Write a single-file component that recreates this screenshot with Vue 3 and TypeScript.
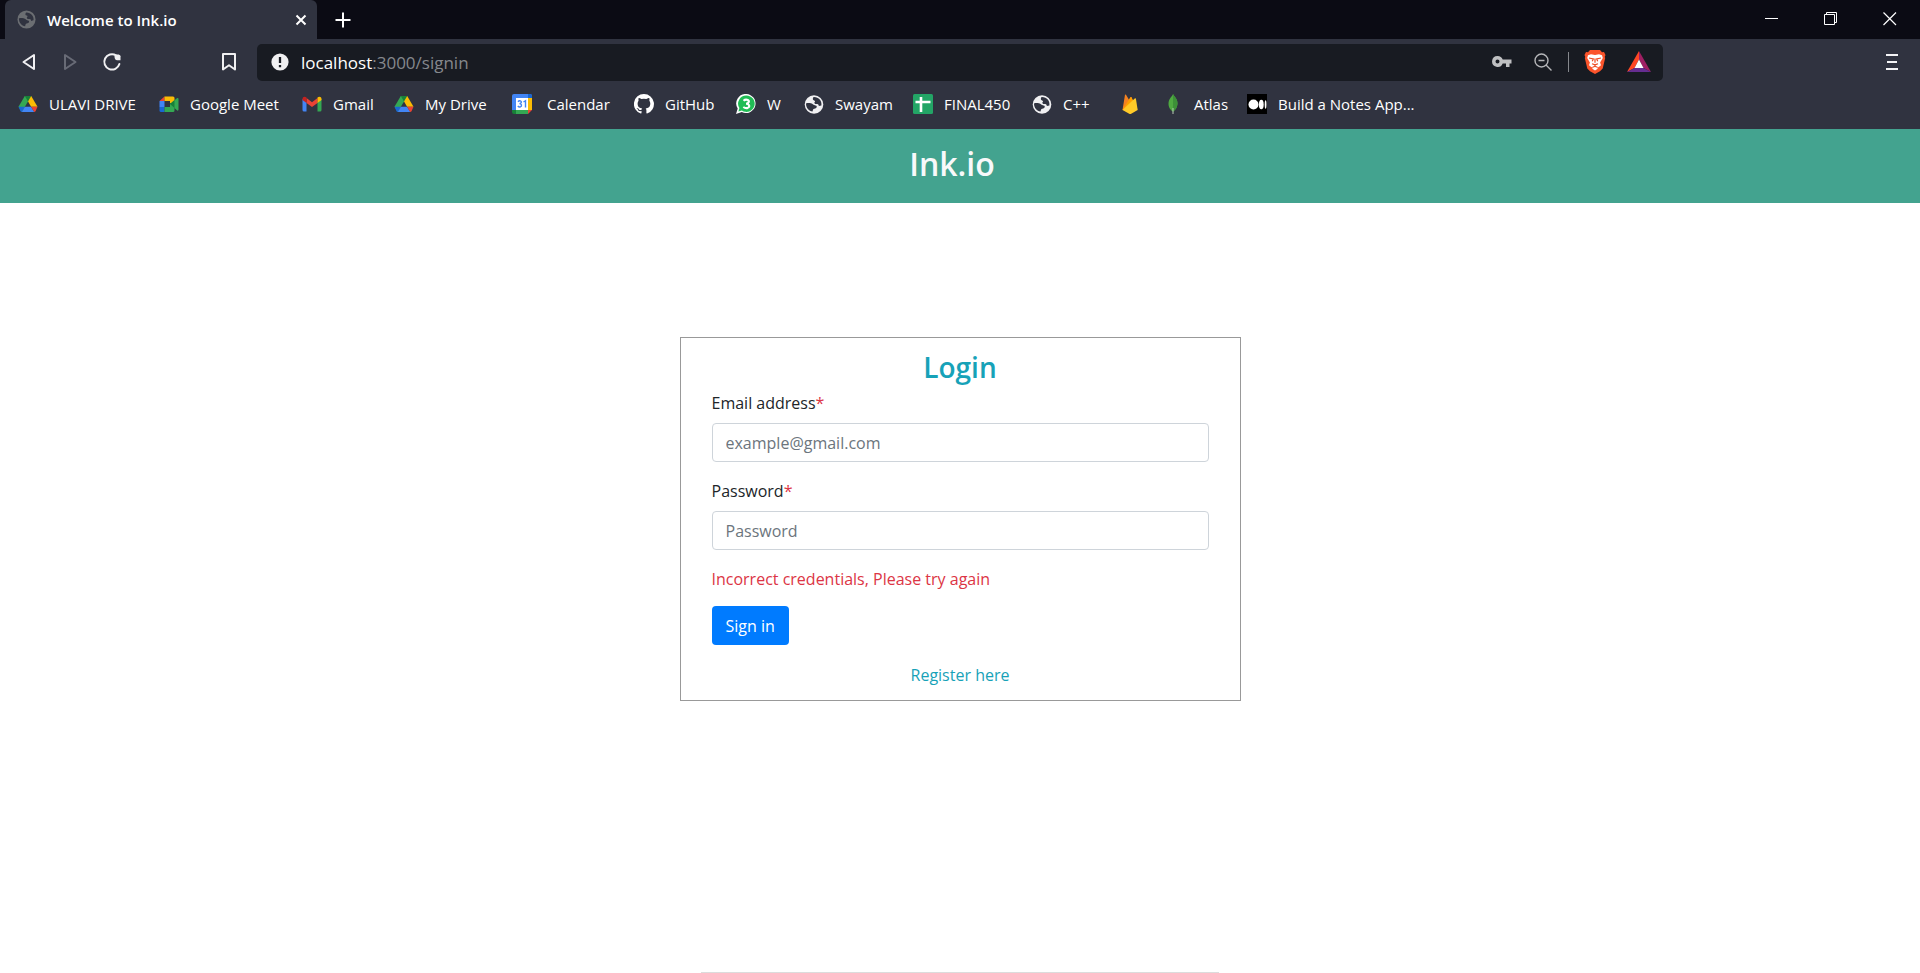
<script setup lang="ts">
import { ref } from 'vue'

interface Bookmark {
  icon: string
  label: string
}

const email = ref('')
const password = ref('')
const message = ref('Incorrect credentials, Please try again')

const bookmarks: Bookmark[] = [
  { icon: 'drive', label: 'ULAVI DRIVE' },
  { icon: 'meet', label: 'Google Meet' },
  { icon: 'gmail', label: 'Gmail' },
  { icon: 'drive', label: 'My Drive' },
  { icon: 'calendar', label: 'Calendar' },
  { icon: 'github', label: 'GitHub' },
  { icon: 'whatsapp', label: 'W' },
  { icon: 'globe', label: 'Swayam' },
  { icon: 'sheet', label: 'FINAL450' },
  { icon: 'globe', label: 'C++' },
  { icon: 'firebase', label: '' },
  { icon: 'leaf', label: 'Atlas' },
  { icon: 'medium', label: 'Build a Notes App...' },
]
</script>

<template>
  <div class="window">
    <header class="chrome">
      <div class="tabs">
        <div class="tab">
          <svg class="tab-icon" viewBox="0 0 20 20" aria-hidden="true">
            <circle cx="10" cy="10" r="9.500" fill="#6b6e72" />
            <path d="M2 9c1.500-.8 3.200-.5 5-.2 2 .3 2.200 2 4.500 2.200 1.500.2 1.700 1.600.6 2.400-1.300.8-2.600.4-3.100 1.800L8.500 17C5 16.800 2 13.500 2 9zM9.500 2.600c-1.200 1.700-.8 3 .7 3.300 1.200.3 1 1.600.1 2 .2 1.700 1.500 1.600 2.900 1.700 1.200.1 1.600 1 1.600 1.900l2.600-.6c.8-4.300-2.900-8.600-7.900-8.300z" fill="#303340" />
          </svg>
          <span class="tab-title">Welcome to Ink.io</span>
          <button class="plain close" type="button" aria-label="Close tab">
            <svg width="12" height="12" viewBox="0 0 12 12"><path d="M1.500 1.500l9 9M10.500 1.500l-9 9" stroke="#fff" stroke-width="2" /></svg>
          </button>
        </div>
        <button class="plain new-tab" type="button" aria-label="New tab">
          <svg width="16" height="16" viewBox="0 0 16 16"><path d="M8 0.500v15M0.500 8h15" stroke="#fff" stroke-width="2" /></svg>
        </button>
        <div class="window-controls">
          <button class="plain" type="button" aria-label="Minimize">
            <svg width="14" height="14" viewBox="0 0 14 14"><path d="M0 6.500h13" stroke="#fff" /></svg>
          </button>
          <button class="plain" type="button" aria-label="Restore">
            <svg width="14" height="14" viewBox="0 0 14 14" fill="none" stroke="#fff"><path d="M.5 2.500h10v10h-10zM2.500 2.500v-2h10v10h-2" /></svg>
          </button>
          <button class="plain" type="button" aria-label="Close">
            <svg width="14" height="14" viewBox="0 0 14 14"><path d="M.5.5l12.500 12.500M13 .5L.5 13" stroke="#fff" stroke-width="1.200" /></svg>
          </button>
        </div>
      </div>

      <div class="toolbar">
        <div class="nav">
          <button class="plain" type="button" aria-label="Back">
            <svg width="18" height="18" viewBox="0 0 18 18"><path d="M14 2v14L3.500 9z" fill="none" stroke="#f0f0f2" stroke-width="2" stroke-linejoin="round" /></svg>
          </button>
          <button class="plain" type="button" aria-label="Forward">
            <svg width="18" height="18" viewBox="0 0 18 18"><path d="M4 2v14l10.500-7z" fill="none" stroke="#686b76" stroke-width="2" stroke-linejoin="round" /></svg>
          </button>
          <button class="plain" type="button" aria-label="Reload">
            <svg width="20" height="20" viewBox="0 0 20 20"><path d="M14 3.300A7.700 7.700 0 1 0 17.400 12" fill="none" stroke="#f0f0f2" stroke-width="2" stroke-linecap="round" /><path d="M12.500 4.500c0-2.500 6-2.500 6-.2v4h-3.300c-1.700 0-2.700-1.600-2.700-3.800z" fill="#f0f0f2" /></svg>
          </button>
          <button class="plain bookmark-page" type="button" aria-label="Bookmark this page">
            <svg width="18" height="20" viewBox="0 0 18 20"><path d="M3 2h12v15.500l-6-4.300-6 4.300z" fill="none" stroke="#f0f0f2" stroke-width="2" stroke-linejoin="round" /></svg>
          </button>
        </div>
        <div class="address">
          <button class="plain" type="button" aria-label="Site information">
            <svg width="18" height="18" viewBox="0 0 18 18"><circle cx="9" cy="9" r="8.600" fill="#f0f0f2" /><path d="M9 4v6M9 12v2.300" stroke="#181b22" stroke-width="2.300" /></svg>
          </button>
          <span class="url"><span class="host">localhost</span>:3000/signin</span>
          <div class="address-actions">
            <button class="plain" type="button" aria-label="Passwords">
              <svg width="20" height="12" viewBox="0 0 20 12"><path fill="#bfc0c2" fill-rule="evenodd" d="M5.500 0a5.500 5.500 0 1 0 5.200 7.500H14V11h3.500V7.500h2v-4h-8.800A5.500 5.500 0 0 0 5.500 0zm0 3.500a2 2 0 1 1 0 4 2 2 0 0 1 0-4z" /></svg>
            </button>
            <button class="plain" type="button" aria-label="Zoom">
              <svg width="18" height="18" viewBox="0 0 18 18" fill="none" stroke="#b5b6b9" stroke-width="1.400"><circle cx="7.500" cy="7.500" r="6.500" /><path d="M4.500 7.500h6M12 12l5.500 5.500" /></svg>
            </button>
            <span class="divider"></span>
            <button class="plain" type="button" aria-label="Brave Shields">
              <svg width="22" height="24" viewBox="0 0 22 24"><path d="M6 0h10l2 2.300 2-.3 1.500 3-.8 2 .5 1-2.500 10.500L16 21.300 11 24l-5-2.700-2.700-2.800L.8 8l.5-1-.8-2L2 2l2 .3z" fill="#fb542b" /><path d="M4 5.200l3-1 4 .8 4-.8 3 1L18.800 8l-2.700 4.500.9 2.700-2.500 2-1.500-.7.7 2.300L11 20.500l-2.700-1.700.7-2.300-1.500.7-2.500-2 .9-2.700L3.200 8z" fill="#fff" /><path d="M5 8l4.300 1-1 2.200M17 8l-4.300 1 1 2.200M11 8.500v4.200M8 13.700l3 1.200 3-1.200M9.200 17.200L11 16l1.800 1.200" fill="none" stroke="#ed491f" stroke-width="1.200" /></svg>
            </button>
            <button class="plain rewards" type="button" aria-label="Brave Rewards">
              <svg width="24" height="22" viewBox="0 0 24 22"><path d="M12 0v8.500L7.500 17 0 21z" fill="#ff4724" /><path d="M12 0l12 21-7.500-4L12 8.500z" fill="#9e1f63" /><path d="M0 21l7.500-4h9l7.500 4z" fill="#662d91" /><path d="M12 8.500l4.500 8.500h-9z" fill="#fff" /></svg>
            </button>
          </div>
        </div>
        <button class="plain menu" type="button" aria-label="Menu">
          <svg width="12" height="18" viewBox="0 0 12 18"><path d="M0 2h12M1 9h10M0 16h12" stroke="#f4f4f6" stroke-width="2" /></svg>
        </button>
      </div>

      <nav class="bookmarks" aria-label="Bookmarks">
        <a v-for="(b, i) in bookmarks" :key="i" href="#" class="bookmark" :class="b.icon" :aria-label="b.label || 'Firebase'">
          <svg class="bookmark-icon" viewBox="0 0 20 20" aria-hidden="true">
            <g v-if="b.icon === 'drive'">
              <path d="M13.200 2l6.300 10.800h-6.400L7.500 3z" fill="#fbbc04" /><path d="M6.800 2h2L10 7.500 6.900 12.800 3.800 18 .5 12.800z" fill="#34a853" /><path d="M6.800 2h6.400L10 7.500z" fill="#188038" />
              <path d="M.5 12.800h6.400L3.800 18c-.6 0-1-.3-1.300-.8z" fill="#1967d2" /><path d="M6.900 12.800h6.200l3.100 5.200H3.800z" fill="#4285f4" /><path d="M13.100 12.800h6.400l-2 4.400c-.3.500-.7.800-1.300.8z" fill="#ea4335" />
            </g>
            <g v-else-if="b.icon === 'meet'">
              <path d="M5.500 2.500V7H.5z" fill="#ea4335" /><path d="M.5 7h5v6h-5z" fill="#4285f4" /><path d="M.5 13h5v5H2q-1.500 0-1.500-1.500z" fill="#1967d2" />
              <path d="M5.500 2.500h8.500q1.500 0 1.500 1.500v6L11 9V7H5.500z" fill="#fbbc04" /><path d="M5.500 13H11v-3l4.500-1v7.500q0 1.500-1.500 1.500H5.500z" fill="#34a853" /><path d="M11 10l7.200-6q1.300-.5 1.300 1v10.500q0 1.500-1.300 1L11 10z" fill="#34a853" /><path d="M11 10l4.500-4v8z" fill="#188038" />
            </g>
            <g v-else-if="b.icon === 'gmail'">
              <path d="M.5 5l4 3v9.500H2q-1.500 0-1.500-1.500z" fill="#4285f4" /><path d="M15.500 8l4-3v11q0 1.500-1.500 1.500h-2.500z" fill="#34a853" /><path d="M4.500 4l5.500 4.200L15.500 4v5L10 13 4.500 9z" fill="#ea4335" /><path d="M4.500 9l-4-3V5c0-2.500 2.500-3 4-1.500z" fill="#c5221f" /><path d="M15.500 9l4-3V5c0-2.500-2.500-3-4-1.500z" fill="#fbbc04" />
            </g>
            <g v-else-if="b.icon === 'calendar'">
              <path d="M0 2q0-2 2-2h16q2 0 2 2v3H0z" fill="#4285f4" /><path d="M0 4h4v12H0z" fill="#4285f4" /><path d="M16 0h2q2 0 2 2v2h-4z" fill="#1967d2" /><path d="M16 4h4v12h-4z" fill="#fbbc04" /><path d="M0 16h4v4H2q-2 0-2-2z" fill="#188038" /><path d="M4 16h12v4H4z" fill="#34a853" /><path d="M16 20v-4h4z" fill="#ea4335" /><path d="M4 4h12v12H4z" fill="#fff" />
              <path d="M6 7.700Q7 6.500 8.400 6.900c1.600.5 1 2.700-1 2.700 2.500 0 2.700 2.600 1 3.200Q7 13.300 5.800 12M11.500 8l2-1.300V13.400" fill="none" stroke="#4285f4" stroke-width="1.400" />
            </g>
            <path v-else-if="b.icon === 'github'" fill="#fff" d="M10 0a10 10 0 0 0-3.200 19.500c.5.100.7-.2.700-.5v-1.900c-2.800.6-3.400-1.200-3.400-1.200-.4-1.100-1.100-1.400-1.100-1.400-.9-.6.100-.6.100-.6 1 .1 1.500 1 1.500 1 .9 1.600 2.400 1.100 2.900.9.100-.7.400-1.100.7-1.400-2.300-.3-4.600-1.100-4.600-4.900 0-1.100.4-2 1-2.700-.1-.3-.4-1.300.1-2.700 0 0 .8-.3 2.700 1a9.600 9.600 0 0 1 5 0c2-1.300 2.800-1 2.800-1 .5 1.400.2 2.400.1 2.700.6.700 1 1.600 1 2.700 0 3.800-2.300 4.700-4.600 4.900.4.300.7.900.7 1.900V19c0 .3.200.6.700.5A10 10 0 0 0 10 0z" />
            <g v-else-if="b.icon === 'whatsapp'">
              <path d="M10.500 0a9.500 9.500 0 1 1-4.700 18L0 20l1.700-5.500A9.500 9.500 0 0 1 10.500 0z" fill="#fff" /><path d="M10.500 1.500a8.200 8.200 0 1 1-4.600 15l-3.500 1 1-3.400a8.200 8.200 0 0 1 7.100-12.600z" fill="#20bd55" />
              <path d="M7.500 6.700Q9.500 5 11.800 6c1.900 1 1.200 3.700-1.800 3.700 3.500 0 4.200 3.200 1.700 4.200Q9.500 14.600 7.300 13" fill="none" stroke="#fff" stroke-width="2.100" />
            </g>
            <g v-else-if="b.icon === 'globe'">
              <circle cx="10" cy="10.500" r="9.300" fill="#f0f0f2" /><path d="M2 9.500c1.500-.8 3.200-.5 5-.2 2 .3 2.200 2 4.500 2.200 1.500.2 1.700 1.600.6 2.400-1.300.8-2.600.4-3.100 1.800l-.5 1.800C5 17.300 2 14 2 9.500zM9.500 3.100c-1.200 1.700-.8 3 .7 3.300 1.200.3 1 1.600.1 2 .2 1.700 1.500 1.600 2.900 1.700 1.200.1 1.600 1 1.600 1.900l2.600-.6c.8-4.300-2.900-8.600-7.900-8.300z" fill="#303340" />
            </g>
            <g v-else-if="b.icon === 'sheet'">
              <rect width="20" height="20" rx="1.500" fill="#23a566" /><path d="M8 3v15M2.500 8h15" stroke="#fff" stroke-width="2.600" />
            </g>
            <g v-else-if="b.icon === 'firebase'">
              <path d="M2.500 16L5 .8q.4-.8 1 0l3 5 1.500-2.600q.5-.6 1 0L17 16z" fill="#f58220" /><path d="M2.500 16L10.500 3.300q.5-.6 1 0L14 9z" fill="#ffa000" /><path d="M2.500 16L15 4.300q.7-.4.900.4L17.700 16l-6.500 3.700q-1 .5-2 0z" fill="#ffca28" />
            </g>
            <g v-else-if="b.icon === 'leaf'">
              <path d="M10 0c.8 2.300 4.700 4.500 4.500 9.700-.2 4-2.500 6.500-4.200 7.800h-.7C8 16.200 5.500 13.700 5.500 9.700 5.500 4.500 9.400 2.400 10 0z" fill="#4faa41" /><path d="M10 0c.8 2.300 4.700 4.500 4.500 9.700-.2 4-2.500 6.500-4.200 7.800H10z" fill="#3d9138" /><path d="M10 14v6" stroke="#b7c9b5" />
            </g>
            <g v-else>
              <path d="M0 0h20v20H0z" fill="#000" /><circle cx="6.500" cy="10.500" r="5" fill="#fff" /><ellipse cx="14.300" cy="10.500" rx="2.400" ry="4.700" fill="#fff" /><ellipse cx="18.600" cy="10.500" rx=".9" ry="4.200" fill="#fff" />
            </g>
          </svg>
          <span v-if="b.label">{{ b.label }}</span>
        </a>
      </nav>
    </header>

    <div class="brand"><h1>Ink.io</h1></div>

    <main>
      <form class="card" @submit.prevent>
        <h2>Login</h2>
        <div class="field">
          <label for="email">Email address<span class="required">*</span></label>
          <input id="email" v-model="email" type="email" placeholder="example@gmail.com" />
        </div>
        <div class="field">
          <label for="password">Password<span class="required">*</span></label>
          <input id="password" v-model="password" type="password" placeholder="Password" />
        </div>
        <p class="error" role="alert">{{ message }}</p>
        <button class="submit" type="submit">Sign in</button>
        <a class="register" href="#">Register here</a>
      </form>
      <hr />
    </main>
  </div>
</template>

<style>
body {
  margin: 0;
  background: #fff;
}
</style>

<style scoped>
.window,
.window * {
  box-sizing: border-box;
}
.window {
  font-family: "Open Sans", "Noto Sans", sans-serif;
  min-height: 100vh;
  display: flex;
  flex-direction: column;
  overflow: hidden;
}
.plain {
  display: flex;
  align-items: center;
  justify-content: center;
  padding: 0;
  border: 0;
  background: none;
  flex: none;
}
.chrome {
  background: #303340;
  color: #fff;
}
.tabs {
  display: flex;
  height: 39px;
  background: #0b0b14;
  padding-left: 5px;
}
.tab {
  display: flex;
  align-items: center;
  width: 312px;
  padding: 0 10px 0 12px;
  background: #303340;
  border-radius: 6px 6px 0 0;
}
.tab-icon {
  width: 19px;
  height: 19px;
}
.tab-title {
  flex: 1;
  margin-left: 11px;
  font-size: 15px;
  font-weight: 600;
}
.new-tab {
  margin-left: 18px;
}
.window-controls {
  display: flex;
  gap: 45px;
  margin-left: auto;
  padding-bottom: 2px;
  padding-right: 23px;
}
.toolbar {
  display: flex;
  align-items: center;
  height: 46px;
}
.nav {
  display: flex;
  align-items: center;
  width: 257px;
  padding: 0 19px 0 20px;
  gap: 23px;
}
.bookmark-page {
  margin-left: auto;
}
.address {
  display: flex;
  align-items: center;
  flex: 1;
  height: 37px;
  padding: 0 12px 0 14px;
  border-radius: 5px;
  background: #181b22;
}
.url {
  margin-left: 12px;
  font-size: 17px;
  color: #85888d;
}
.host {
  color: #fff;
}
.address-actions {
  display: flex;
  align-items: center;
  margin-left: auto;
}
.address-actions .plain + .plain {
  margin-left: 22px;
}
.divider {
  width: 1px;
  height: 20px;
  margin: 0 15px 0 16px;
  background: #85888d;
}
.address-actions .plain.rewards {
  margin-left: 21px;
}
.menu {
  margin-left: 223px;
  margin-right: 22px;
}
.bookmarks {
  display: grid;
  grid-template-columns: 141px 143px 92px 118px 122px 102px 68px 109px 119px 88px 43px 84px auto;
  align-items: center;
  height: 44px;
  padding: 0 0 6px 18px;
}
.bookmark {
  display: flex;
  align-items: center;
  gap: 11px;
  color: #fff;
  font-size: 15px;
  line-height: 20px;
  text-decoration: none;
  white-space: nowrap;
}
.calendar {
  gap: 15px;
}
.bookmark-icon {
  width: 20px;
  height: 20px;
  flex: none;
}
.brand {
  display: flex;
  justify-content: center;
  padding: 15px 16px 19px 0;
  background: #43a38f;
}
.brand h1 {
  margin: 0;
  font-size: 32px;
  line-height: 40px;
  font-weight: 600;
  color: #f8f9fa;
}
main {
  display: flex;
  flex: 1;
  flex-direction: column;
  align-items: center;
  padding-top: 134px;
}
.card {
  display: flex;
  flex-direction: column;
  width: 561px;
  max-width: 100%;
  padding: 12px 31px;
  border: 1px solid #999;
  font-size: 16px;
  line-height: 26px;
  color: #212529;
}
.card h2 {
  margin: 0 0 6px;
  font-size: 28px;
  line-height: 34px;
  font-weight: 600;
  text-align: center;
  color: #17a2b8;
}
.field {
  display: flex;
  flex-direction: column;
  gap: 7px;
  margin-bottom: 16px;
}
.required,
.error {
  color: #dc3545;
}
.field input {
  width: 100%;
  height: 39px;
  padding: 0 13px;
  border: 1px solid #ced4da;
  border-radius: 4px;
  background: #fff;
  font: inherit;
  color: #495057;
}
.field input::placeholder {
  color: #6c757d;
  opacity: 1;
}
.error {
  margin: 0 0 14px;
}
.submit {
  align-self: flex-start;
  height: 39px;
  padding: 0 14px;
  border: 0;
  border-radius: 4px;
  background: #007bff;
  color: #fff;
  font: inherit;
}
.register {
  align-self: center;
  margin-top: 17px;
  color: #17a2b8;
  text-decoration: none;
}
hr {
  width: 27%;
  margin: auto 0 0;
  border: 0;
  border-top: 1px solid #dcdcdc;
}
</style>
